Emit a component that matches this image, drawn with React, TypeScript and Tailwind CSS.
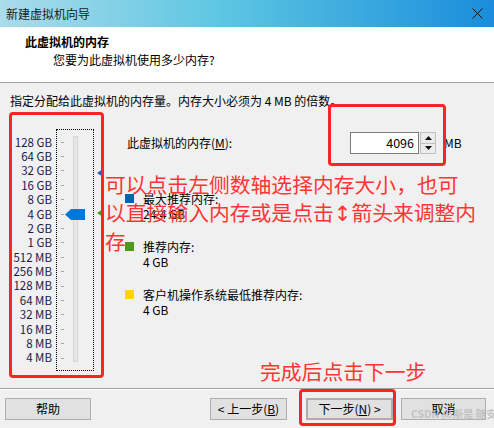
import React from "react";

const sizes = [
  "128 GB", "64 GB", "32 GB", "16 GB", "8 GB", "4 GB", "2 GB", "1 GB",
  "512 MB", "256 MB", "128 MB", "64 MB", "32 MB", "16 MB", "8 MB", "4 MB",
];

function Legend({ color, label, value }: { color: string; label: string; value: string }) {
  return (
    <div className="flex">
      <div className={`w-[9px] h-[9px] mt-[3px] ${color}`} />
      <div className="ml-[9px] flex flex-col leading-[15px]">
        <span>{label}</span>
        <span>{value}</span>
      </div>
    </div>
  );
}

function Btn({ children, className = "" }: { children: React.ReactNode; className?: string }) {
  return (
    <div
      className={`h-[22px] flex items-center justify-center bg-[#e1e1e1] border border-[#adadad] ${className}`}
    >
      {children}
    </div>
  );
}

export default function App() {
  return (
    <div className="w-[494px] h-[428px] bg-[#f0f0f0] flex flex-col relative overflow-hidden text-[12px] text-black font-['Noto_Sans_CJK_SC','Microsoft_YaHei',sans-serif]">
      {/* title bar */}
      <div className="h-[27px] shrink-0 flex items-center justify-between pl-[6px] pr-[11px] bg-[linear-gradient(to_right,#abdcea,#5cc6e2_45%,#1a8ddb)]">
        <span className="text-[#1a1a1a]">新建虚拟机向导</span>
        <svg width="11" height="11" viewBox="0 0 11 11">
          <path d="M0.5 0.5L10.5 10.5M10.5 0.5L0.5 10.5" stroke="#111" strokeWidth="1" />
        </svg>
      </div>

      {/* header */}
      <div className="h-[56px] shrink-0 bg-white border-b border-[#a0a0a0] pl-[25px] pt-[7px] leading-[16px]">
        <div className="font-bold">此虚拟机的内存</div>
        <div className="ml-[28px] mt-[2px]">您要为此虚拟机使用多少内存?</div>
      </div>

      {/* body */}
      <div className="flex flex-col pt-[10px]">
        <div className="pl-[10px] leading-[16px]">指定分配给此虚拟机的内存量。内存大小必须为 4 MB 的倍数。</div>

        <div className="flex mt-[20px]">
          {/* labels */}
          <div className="w-[52px] pt-[6px] flex flex-col text-[#1b1b4b] text-[11.5px]">
            {sizes.map((s) => (
              <div key={s} className="h-[14.4px] flex items-center justify-end">
                {s}
              </div>
            ))}
          </div>

          {/* slider */}
          <div className="ml-[4px] w-[38px] h-[242px] border border-dotted border-black relative flex">
            <div className="ml-[4px] pt-[5px] w-[3px] flex flex-col">
              {sizes.map((s) => (
                <div key={s} className="h-[14.4px] flex items-center">
                  <div className="w-[3px] h-px bg-[#a8a8a8]" />
                </div>
              ))}
            </div>
            <div className="ml-[9px] mt-[6px] w-[5px] h-[226px] bg-[#e7e7e7] border border-[#d6d6d6]" />
            <svg className="absolute left-[8px] top-[79px]" width="20" height="11" viewBox="0 0 20 11">
              <path d="M0 5.5L6 0H20V11H6Z" fill="#0078d7" />
            </svg>
          </div>

          {/* markers */}
          <div className="w-[12px] relative">
            <svg className="absolute left-[3px] top-[40px]" width="6" height="8" viewBox="0 0 6 8">
              <path d="M0 4L6 0V8Z" fill="#1565c0" />
            </svg>
            <svg className="absolute left-[3px] top-[80px]" width="6" height="8" viewBox="0 0 6 8">
              <path d="M0 4L6 0V8Z" fill="#4c9a1c" />
            </svg>
          </div>

          {/* right panel */}
          <div className="ml-[19px] flex flex-col">
            <div className="flex items-center mt-[3px]">
              <span className="w-[225px] pl-[2px]">
                此虚拟机的内存(<span className="underline">M</span>):
              </span>
              <div className="w-[69px] h-[22px] bg-white border border-[#7a7a7a] flex items-center justify-end pr-[4px] text-[12.5px]">
                4096
              </div>
              <div className="w-[16px] h-[22px] flex flex-col border border-[#c0c0c0] ml-px">
                <div className="flex-1 flex items-center justify-center bg-[#ececec] border-b border-[#c0c0c0]">
                  <svg width="7" height="4" viewBox="0 0 7 4">
                    <path d="M0 4L3.5 0L7 4Z" fill="#111" />
                  </svg>
                </div>
                <div className="flex-1 flex items-center justify-center bg-[#ececec]">
                  <svg width="7" height="4" viewBox="0 0 7 4">
                    <path d="M0 0L3.5 4L7 0Z" fill="#111" />
                  </svg>
                </div>
              </div>
              <span className="ml-[8px]">MB</span>
            </div>

            <div className="mt-[37px] flex flex-col gap-[18px]">
              <Legend color="bg-[#0063b1]" label="最大推荐内存:" value="24.4 GB" />
              <Legend color="bg-[#4c9a1c]" label="推荐内存:" value="4 GB" />
              <Legend color="bg-[#ffd400]" label="客户机操作系统最低推荐内存:" value="4 GB" />
            </div>
          </div>
        </div>
      </div>

      {/* footer */}
      <div className="mt-auto h-[40px] border-t border-[#a0a0a0]">
        <div className="border-t border-white flex pl-[5px] pt-[8px]">
          <Btn className="w-[86px]">帮助</Btn>
          <Btn className="w-[77px] ml-[119px]">
            &lt; 上一步(<span className="underline">B</span>)
          </Btn>
          <Btn className="w-[87px] ml-[19px] border-2 border-[#0078d7]">
            下一步(<span className="underline">N</span>) &gt;
          </Btn>
          <Btn className="w-[85px] ml-[8px]">取消</Btn>
        </div>
      </div>

      {/* annotations */}
      <div className="absolute left-[9px] top-[112px] w-[95px] h-[266px] border-[3px] border-[#ff2323] rounded-[4px]" />
      <div className="absolute left-[328px] top-[104px] w-[118px] h-[62px] border-[3px] border-[#ff2323] rounded-[4px]" />
      <div className="absolute left-[299px] top-[389px] w-[97px] h-[37px] border-[3px] border-[#ff2323] rounded-[4px]" />
      <div className="absolute left-[105px] top-[171px] text-[20.8px] leading-[27.5px] text-[#ff3535] whitespace-nowrap">
        <div>可以点击左侧数轴选择内存大小，也可</div>
        <div>
          以直接输入内存或是点击<span className="font-['DejaVu_Sans',sans-serif] text-[21px]">↕</span>箭头来调整内
        </div>
        <div>存</div>
      </div>
      <div className="absolute left-[260px] top-[358px] text-[20.8px] leading-[27px] text-[#ff3535] whitespace-nowrap">
        完成后点击下一步
      </div>
      <div className="absolute left-[411px] top-[406px] text-[10.5px] font-bold text-[#b4b4b4]/70 whitespace-nowrap">
        CSDN @斯是 随安
      </div>
    </div>
  );
}
